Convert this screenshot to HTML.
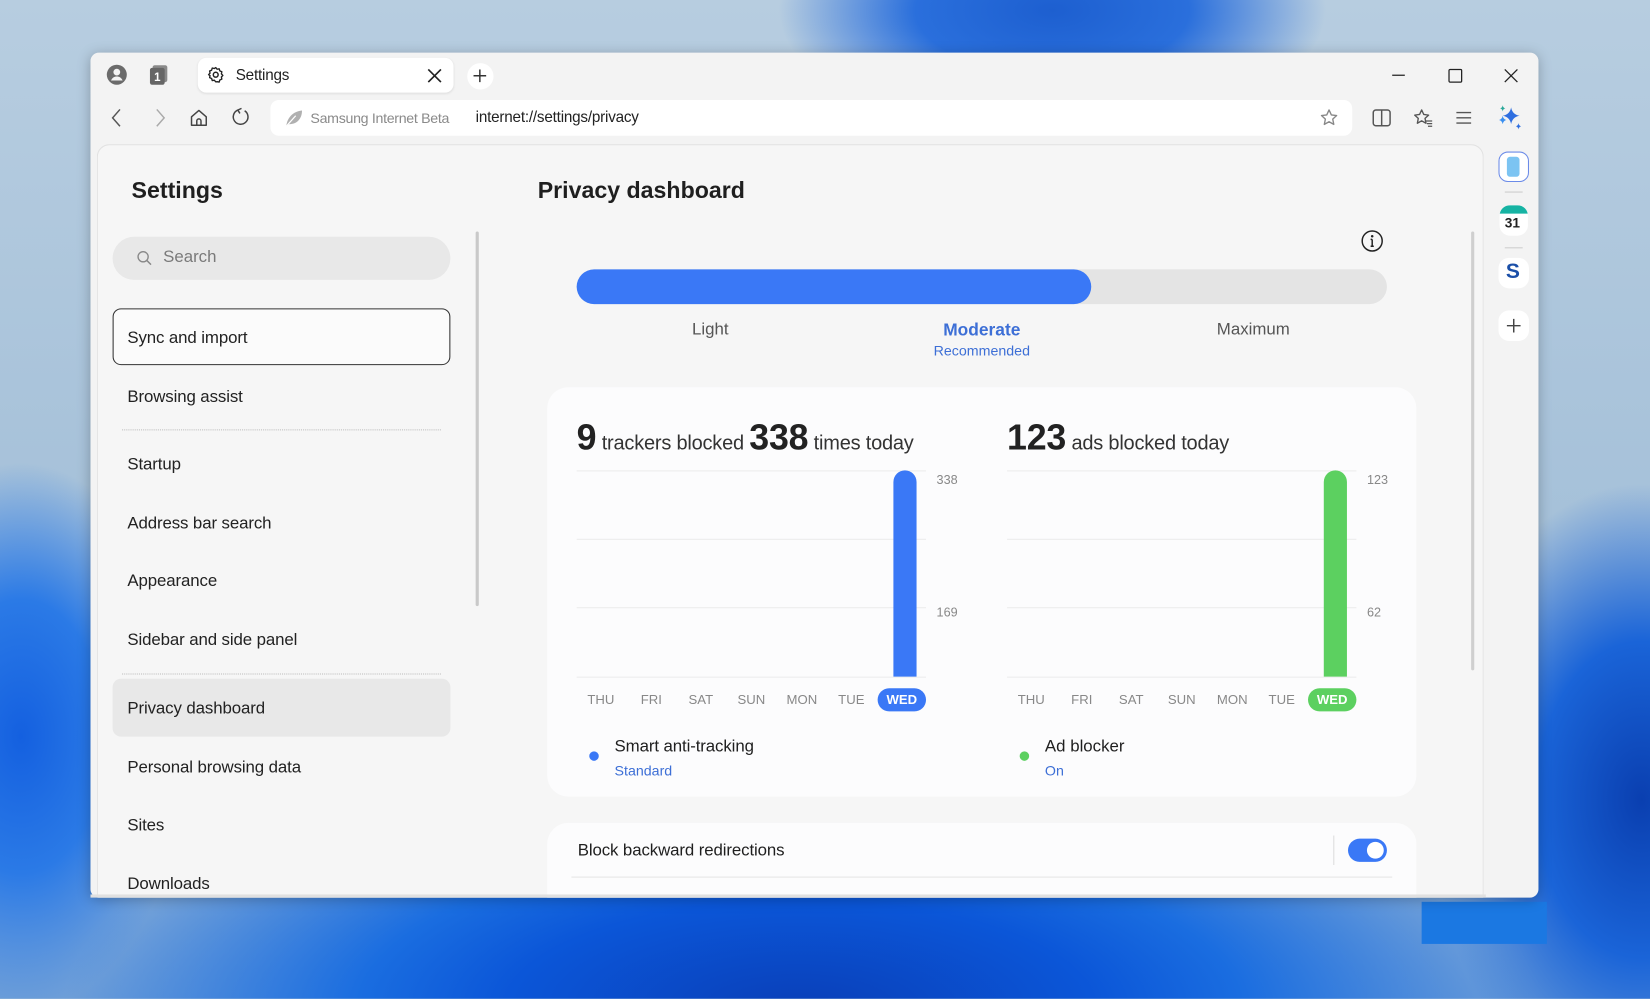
<!DOCTYPE html>
<html><head><meta charset="utf-8"><style>
*{box-sizing:border-box;margin:0;padding:0}
html,body{width:1650px;height:999px;overflow:hidden}
body{font-family:"Liberation Sans","DejaVu Sans",sans-serif;color:#1f1f1f;
background:#a8c2d9}
#s{position:absolute;left:0;top:0;width:1568px;height:949px;transform:scale(1.05230);transform-origin:0 0;overflow:hidden;
background:
radial-gradient(ellipse 260px 120px at 1000px 10px,#1d5fd0 0%,#2a6fdc 50%,rgba(40,110,220,0) 100%),
radial-gradient(ellipse 700px 260px at 760px 960px,#0a3fb8 0%,#0b56d8 40%,#1a6de0 60%,rgba(30,100,220,0) 100%),
radial-gradient(ellipse 160px 260px at 20px 700px,#1460e0 0%,#2b7ae6 50%,rgba(60,130,230,0) 100%),
radial-gradient(ellipse 200px 300px at 1560px 760px,#0a3fb0 0%,#1a64d8 50%,rgba(30,100,220,0) 100%),
linear-gradient(180deg,#b7cde0 0%,#a3bfd8 60%,#6f9fd8 100%)}
.a{position:absolute}
.t{position:absolute;white-space:nowrap}
.win{left:86px;top:50px;width:1376px;height:803px;background:#f3f3f3;border-radius:8px;box-shadow:0 2px 12px rgba(0,0,0,.25)}
.panel{left:92px;top:137px;width:1318px;height:716px;background:#f6f6f6;border:1px solid #e2e2e2;border-bottom:none;border-radius:12px 12px 0 0}
.mi{position:absolute;left:121px;font-size:16px;color:#222;transform:translateY(-50%);margin-top:1px;letter-spacing:-0.1px}
.card{background:#fcfcfd;border-radius:20px}
.gl{position:absolute;height:1px;background:#ececec}
.day{position:absolute;font-size:12.5px;color:#888;transform:translate(-50%,-50%)}
.pill{position:absolute;width:46px;height:22px;border-radius:11px;color:#fff;font-weight:bold;font-size:12.5px;text-align:center;line-height:22px}
svg{position:absolute;overflow:visible}
</style></head><body><div id="s">
<div class="a" style="left:1351px;top:857px;width:119px;height:40px;background:#1b78e2"></div>
<div class="a win"></div>
<!-- title bar -->
<svg style="left:101px;top:61px" width="20" height="20" viewBox="0 0 20 20"><circle cx="10" cy="10" r="9.5" fill="#6b6b6b"/><circle cx="10" cy="7.5" r="3.2" fill="#f3f3f3"/><path d="M4.5 15.5c1.2-2.8 3.2-3.8 5.5-3.8s4.3 1 5.5 3.8" fill="#f3f3f3"/></svg>
<svg style="left:141px;top:61px" width="20" height="20" viewBox="0 0 20 20"><rect x="4" y="1" width="14" height="16" rx="2" fill="#8a8a8a"/><rect x="1.5" y="3.5" width="14" height="16" rx="2" fill="#666"/><text x="8.5" y="16" font-size="11" font-weight="bold" fill="#fff" text-anchor="middle" font-family="Liberation Sans">1</text></svg>
<div class="a" style="left:188px;top:55px;width:243px;height:33px;background:#fff;border-radius:8px;box-shadow:0 1px 2px rgba(0,0,0,.08)"></div>
<svg style="left:197px;top:63px" width="16" height="16" viewBox="0 0 16 16"><circle cx="8" cy="8" r="2.3" fill="none" stroke="#222" stroke-width="1.4"/><path d="M8 1.2l1.3 1.6 2-.4.6 2 1.9.8-.4 2 1.4 1.5-1.4 1.5.4 2-1.9.8-.6 2-2-.4L8 14.8l-1.3-1.6-2 .4-.6-2-1.9-.8.4-2L1.2 8l1.4-1.5-.4-2 1.9-.8.6-2 2 .4z" fill="none" stroke="#222" stroke-width="1.3" stroke-linejoin="round"/></svg>
<div class="t" style="left:224px;top:64px;font-size:14.5px;letter-spacing:-0.2px">Settings</div>
<svg style="left:406px;top:65px" width="14" height="14" viewBox="0 0 14 14"><path d="M1 1l12 12M13 1L1 13" stroke="#222" stroke-width="1.6"/></svg>
<div class="a" style="left:444px;top:60px;width:25px;height:25px;border-radius:50%;background:#fff"></div>
<svg style="left:449px;top:65px" width="14" height="14" viewBox="0 0 14 14"><path d="M7 1v12M1 7h12" stroke="#333" stroke-width="1.4"/></svg>
<svg style="left:1322px;top:64px" width="14" height="14"><path d="M1 7.5h12" stroke="#222" stroke-width="1.2"/></svg>
<svg style="left:1376px;top:65px" width="14" height="14"><rect x="1" y="1" width="12" height="12" rx="1" fill="none" stroke="#222" stroke-width="1.2"/></svg>
<svg style="left:1429px;top:65px" width="14" height="14"><path d="M1 1l12 12M13 1L1 13" stroke="#222" stroke-width="1.2"/></svg>
<!-- nav -->
<svg style="left:104px;top:103px" width="14" height="18"><path d="M10 1L3 9l7 8" fill="none" stroke="#555" stroke-width="1.4"/></svg>
<svg style="left:145px;top:103px" width="14" height="18"><path d="M4 1l7 8-7 8" fill="none" stroke="#aaa" stroke-width="1.4"/></svg>
<svg style="left:180px;top:103px" width="18" height="18" viewBox="0 0 18 18"><path d="M2 8L9 2l7 6v8H2z" fill="none" stroke="#444" stroke-width="1.4" stroke-linejoin="round"/><path d="M7 16v-4a2 2 0 014 0v4" fill="none" stroke="#444" stroke-width="1.4"/></svg>
<svg style="left:220px;top:102px" width="18" height="18" viewBox="0 0 18 18"><path d="M12.5 3.2A7 7 0 1 1 6 2.6" fill="none" stroke="#444" stroke-width="1.4"/><path d="M9.5 1L6 2.6 8 5.8" fill="none" stroke="#444" stroke-width="1.4"/></svg>
<div class="a" style="left:257px;top:95px;width:1028px;height:34px;background:#fff;border-radius:8px"></div>
<svg style="left:270px;top:104px" width="18" height="17" viewBox="0 0 18 17"><path d="M2 16C3 8 8 2 17 1c0 8-5 13-12 13z" fill="#b0b0b0"/><path d="M2 16L11 6" stroke="#fff" stroke-width="1.2"/></svg>
<div class="t" style="left:295px;top:105px;font-size:13.5px;color:#8a8a8a;letter-spacing:-0.3px">Samsung Internet Beta</div>
<div class="t" style="left:452px;top:104px;font-size:14.5px;color:#222;letter-spacing:-0.2px">internet://settings/privacy</div>
<svg style="left:1254px;top:103px" width="18" height="18" viewBox="0 0 18 18"><path d="M9 1.5l2.2 4.7 5 .6-3.7 3.4 1 5L9 12.7l-4.5 2.5 1-5L1.8 6.8l5-.6z" fill="none" stroke="#888" stroke-width="1.3" stroke-linejoin="round"/></svg>
<svg style="left:1304px;top:103px" width="18" height="18"><rect x="1" y="1.5" width="16" height="15" rx="2.5" fill="none" stroke="#555" stroke-width="1.4"/><path d="M9 1.5v15" stroke="#555" stroke-width="1.4"/></svg>
<svg style="left:1343px;top:103px" width="20" height="18" viewBox="0 0 20 18"><path d="M8 1.5l2 4.3 4.6.6-3.4 3.1.9 4.6L8 11.8 3.9 14.1l.9-4.6L1.4 6.4 6 5.8z" fill="none" stroke="#555" stroke-width="1.3" stroke-linejoin="round"/><path d="M12 12h6M13 14.5h5M14 17h4" stroke="#555" stroke-width="1.2"/></svg>
<svg style="left:1383px;top:104px" width="16" height="16"><path d="M1 3h14M1 8h14M1 13h14" stroke="#555" stroke-width="1.3"/></svg>
<svg style="left:1422px;top:99px" width="26" height="26" viewBox="0 0 26 26"><path d="M14 3Q15.2 9.8 22 11 15.2 12.2 14 19 12.8 12.2 6 11 12.8 9.8 14 3z" fill="#2f6fe0"/><path d="M6 11Q6.6 14.4 9.5 15 6.6 15.6 6 19 5.4 15.6 2.5 15 5.4 14.4 6 11z" fill="#3a8ff0"/><path d="M6 1Q6.4 3.6 8.5 4 6.4 4.4 6 7 5.6 4.4 3.5 4 5.6 3.6 6 1z" fill="#2aa89a"/><path d="M21 18Q21.4 20.6 23.5 21 21.4 21.4 21 24 20.6 21.4 18.5 21 20.6 20.6 21 18z" fill="#2f6fe0"/></svg>
<!-- right sidebar -->
<div class="a" style="left:1424px;top:144px;width:29px;height:29px;border-radius:9px;border:1.5px solid #6b8be8;background:#fff"></div>
<div class="a" style="left:1432px;top:149px;width:12px;height:19px;border-radius:3px;background:#7cc4f2"></div>
<div class="a" style="left:1430px;top:182px;width:17px;height:1px;background:#ccc"></div>
<div class="a" style="left:1425px;top:195px;width:27px;height:29px;border-radius:10px;background:#fff;overflow:hidden"><div style="height:8px;background:#16b3a3;border-radius:10px 10px 0 0"></div></div>
<div class="t" style="left:1430px;top:204px;font-size:13px;font-weight:bold;color:#222">31</div>
<div class="a" style="left:1430px;top:235px;width:17px;height:1px;background:#ccc"></div>
<div class="a" style="left:1424px;top:245px;width:29px;height:29px;border-radius:10px;background:#fff"></div>
<div class="t" style="left:1431px;top:247px;font-size:20px;font-weight:bold;color:#1b4fa8">S</div>
<div class="a" style="left:1424px;top:295px;width:29px;height:29px;border-radius:10px;background:#fff"></div>
<svg style="left:1432px;top:303px" width="13" height="13"><path d="M6.5 0v13M0 6.5h13" stroke="#444" stroke-width="1.4"/></svg>
<!-- content panel -->
<div class="a panel"></div>
<div class="t" style="left:125px;top:168px;font-size:22px;font-weight:bold">Settings</div>
<div class="a" style="left:107px;top:225px;width:321px;height:41px;border-radius:21px;background:#e8e8e8"></div>
<svg style="left:130px;top:238px" width="15" height="15"><circle cx="6" cy="6" r="4.8" fill="none" stroke="#888" stroke-width="1.3"/><path d="M9.5 9.5l4 4" stroke="#888" stroke-width="1.4"/></svg>
<div class="t" style="left:155px;top:236px;font-size:16px;color:#7a7a7a">Search</div>
<div class="a" style="left:107px;top:293px;width:321px;height:54px;border:1.4px solid #333;border-radius:8px;background:#fbfbfb"></div>
<div class="mi" style="top:321px">Sync and import</div>
<div class="mi" style="top:377px">Browsing assist</div>
<div class="a" style="left:116px;top:408px;width:303px;border-top:1px dotted #bbb"></div>
<div class="mi" style="top:441px">Startup</div>
<div class="mi" style="top:497px">Address bar search</div>
<div class="mi" style="top:552px">Appearance</div>
<div class="mi" style="top:608px">Sidebar and side panel</div>
<div class="a" style="left:116px;top:640px;width:303px;border-top:1px dotted #bbb"></div>
<div class="a" style="left:107px;top:645px;width:321px;height:55px;border-radius:8px;background:#e8e8e8"></div>
<div class="mi" style="top:673px">Privacy dashboard</div>
<div class="mi" style="top:729px">Personal browsing data</div>
<div class="mi" style="top:784px">Sites</div>
<div class="mi" style="top:840px">Downloads</div>
<div class="a" style="left:452px;top:220px;width:3px;height:356px;background:#c9c9c9;border-radius:2px"></div>
<div class="a" style="left:1398px;top:220px;width:3px;height:417px;background:#cfcfcf;border-radius:2px"></div>
<div class="t" style="left:511px;top:168px;font-size:22px;font-weight:bold">Privacy dashboard</div>
<svg style="left:1293px;top:218px" width="22" height="22"><circle cx="11" cy="11" r="9.5" fill="none" stroke="#222" stroke-width="1.4"/><circle cx="11" cy="6.5" r="1.2" fill="#222"/><path d="M11 9.5v6.5M9.5 16h3M9.5 9.5H11" stroke="#222" stroke-width="1.4"/></svg>
<div class="a" style="left:548px;top:256px;width:770px;height:33px;border-radius:17px;background:#e4e4e4"></div>
<div class="a" style="left:548px;top:256px;width:489px;height:33px;border-radius:17px;background:#3a78f6"></div>
<div class="t" style="left:675px;top:305px;font-size:16px;color:#555;transform:translateX(-50%)">Light</div>
<div class="t" style="left:933px;top:305px;font-size:16.5px;color:#3d6fd6;font-weight:bold;transform:translateX(-50%)">Moderate</div>
<div class="t" style="left:933px;top:326px;font-size:13.5px;color:#3d6fd6;transform:translateX(-50%)">Recommended</div>
<div class="t" style="left:1191px;top:305px;font-size:16px;color:#555;transform:translateX(-50%)">Maximum</div>
<!-- card 1 -->
<div class="a card" style="left:520px;top:368px;width:826px;height:389px"></div>
<div class="t" style="left:548px;top:397px;font-size:19px;color:#333;letter-spacing:-0.2px"><span style="font-size:34px;font-weight:bold;color:#222">9</span> trackers blocked <span style="font-size:34px;font-weight:bold;color:#222">338</span> times today</div>
<div class="gl" style="left:548px;top:447px;width:332px"></div>
<div class="gl" style="left:548px;top:512px;width:332px"></div>
<div class="gl" style="left:548px;top:577px;width:332px"></div>
<div class="gl" style="left:548px;top:643px;width:332px"></div>
<div class="a" style="left:849px;top:447px;width:22px;height:196px;background:#3a78f6;border-radius:11px 11px 0 0"></div>
<div class="t" style="left:890px;top:449px;font-size:12px;color:#888">338</div>
<div class="t" style="left:890px;top:575px;font-size:12px;color:#888">169</div>
<div class="day" style="left:571px;top:665px">THU</div><div class="day" style="left:619px;top:665px">FRI</div><div class="day" style="left:666px;top:665px">SAT</div><div class="day" style="left:714px;top:665px">SUN</div><div class="day" style="left:762px;top:665px">MON</div><div class="day" style="left:809px;top:665px">TUE</div>
<div class="pill" style="left:834px;top:654px;background:#3a78f6">WED</div>
<div class="a" style="left:560px;top:714px;width:9px;height:9px;border-radius:50%;background:#3a78f6"></div>
<div class="t" style="left:584px;top:701px;font-size:16px;letter-spacing:-0.1px">Smart anti-tracking</div>
<div class="t" style="left:584px;top:725px;font-size:13.5px;color:#3d6fd6">Standard</div>
<div class="t" style="left:957px;top:397px;font-size:19px;color:#333;letter-spacing:-0.2px"><span style="font-size:34px;font-weight:bold;color:#222">123</span> ads blocked today</div>
<div class="gl" style="left:957px;top:447px;width:332px"></div>
<div class="gl" style="left:957px;top:512px;width:332px"></div>
<div class="gl" style="left:957px;top:577px;width:332px"></div>
<div class="gl" style="left:957px;top:643px;width:332px"></div>
<div class="a" style="left:1258px;top:447px;width:22px;height:196px;background:#5cd060;border-radius:11px 11px 0 0"></div>
<div class="t" style="left:1299px;top:449px;font-size:12px;color:#888">123</div>
<div class="t" style="left:1299px;top:575px;font-size:12px;color:#888">62</div>
<div class="day" style="left:980px;top:665px">THU</div><div class="day" style="left:1028px;top:665px">FRI</div><div class="day" style="left:1075px;top:665px">SAT</div><div class="day" style="left:1123px;top:665px">SUN</div><div class="day" style="left:1171px;top:665px">MON</div><div class="day" style="left:1218px;top:665px">TUE</div>
<div class="pill" style="left:1243px;top:654px;background:#5cd060">WED</div>
<div class="a" style="left:969px;top:714px;width:9px;height:9px;border-radius:50%;background:#5cd060"></div>
<div class="t" style="left:993px;top:701px;font-size:16px">Ad blocker</div>
<div class="t" style="left:993px;top:725px;font-size:13.5px;color:#3d6fd6">On</div>
<!-- card 2 -->
<div class="a" style="left:520px;top:782px;width:826px;height:71px;background:#fcfcfd;border-radius:20px 20px 0 0"></div>
<div class="t" style="left:549px;top:800px;font-size:16px;letter-spacing:-0.1px">Block backward redirections</div>
<div class="a" style="left:1267px;top:794px;width:1px;height:28px;background:#ddd"></div>
<div class="a" style="left:1281px;top:797px;width:37px;height:22px;border-radius:11px;background:#3a78f6"></div>
<div class="a" style="left:1299px;top:800px;width:16px;height:16px;border-radius:50%;background:#fff"></div>
<div class="a" style="left:543px;top:833px;width:780px;height:1px;background:#e6e6e6"></div>
<div class="a" style="left:86px;top:850px;width:1326px;height:3px;background:#e0e0e0"></div>
</div></body></html>
